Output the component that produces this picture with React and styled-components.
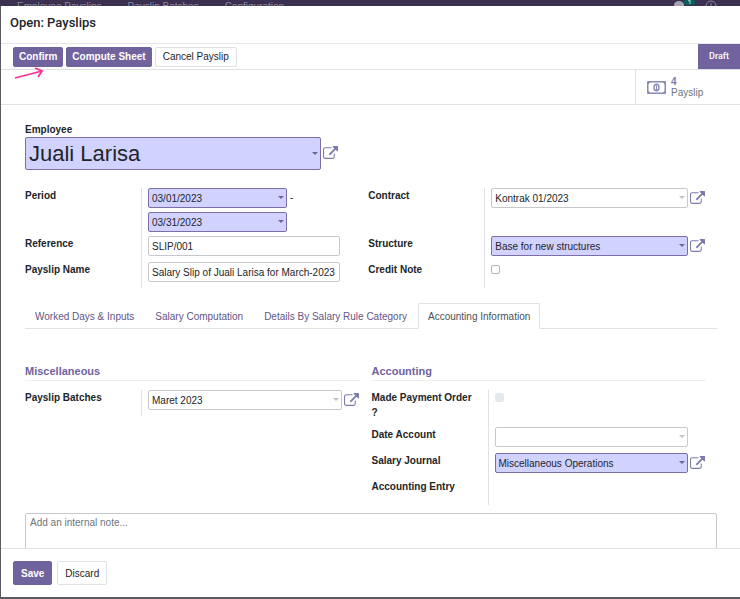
import React from 'react';
import styled, { createGlobalStyle, css } from 'styled-components';

const GlobalStyle = createGlobalStyle`
  * {
    box-sizing: border-box;
  }

  body {
    margin: 0;
    background: #5c5a61;
    color: #212529;
    font-family: 'Liberation Sans', Arial, sans-serif;
    font-size: 10px;
    line-height: 15px;
  }

  button,
  input,
  select,
  textarea {
    font: inherit;
    color: inherit;
  }
`;

const Screen = styled.div`
  display: flex;
  flex-direction: column;
  height: 100vh;
  padding-bottom: 2px;
`;

const NavStrip = styled.nav`
  display: flex;
  gap: 26px;
  flex: none;
  height: 6px;
  padding: 0 23px 0 17px;
  overflow: hidden;
  background: #3b3050;
  color: #8d879a;
  line-height: 13px;
`;

const NavItem = styled.a`
  color: inherit;
  text-decoration: none;
`;

const NavIcons = styled.div`
  display: flex;
  margin-left: auto;
`;

const Dialog = styled.main`
  display: flex;
  flex: 1;
  flex-direction: column;
  min-height: 0;
  margin-left: 1px;
  background: #fff;
`;

const DialogHeader = styled.header`
  flex: none;
  height: 38px;
  padding: 0 9px;
  border-bottom: 1px solid #e3e6ea;
`;

const DialogTitle = styled.h1`
  margin: 0;
  font-family: Roboto, 'Liberation Sans', sans-serif;
  font-size: 13px;
  font-weight: 500;
  line-height: 34px;
`;

const StatusBar = styled.div`
  display: flex;
  flex: none;
  align-items: center;
  gap: 3px;
  height: 26px;
  padding-left: 12px;
  border-bottom: 1px solid #dee2e6;
`;

const Button = styled.button`
  height: ${props => (props.$tall ? '24px' : '20px')};
  padding: 0 ${props => (props.$snug ? '5px' : '7px')};
  border: 1px solid ${props => (props.$primary ? '#71639e' : '#dee2e6')};
  border-radius: 2px;
  background: ${props => (props.$primary ? '#71639e' : '#fff')};
  color: ${props => (props.$primary ? '#fff' : '#212529')};
  font-weight: ${props => (props.$primary ? 'bold' : 'normal')};
  cursor: pointer;
`;

const ConfirmSlot = styled.div`
  display: flex;
  position: relative;
`;

const Pointer = styled.svg`
  position: absolute;
  top: 20px;
  left: 1px;
  overflow: visible;
`;

const Stage = styled.div`
  align-self: stretch;
  margin-left: auto;
  padding: 0 11px;
  background: #71639e;
  color: #fff;
  font-family: Roboto, 'Liberation Sans', sans-serif;
  font-size: 9px;
  font-weight: 500;
  line-height: 24px;
`;

const ButtonBox = styled.div`
  display: flex;
  flex: none;
  justify-content: flex-end;
  height: 35px;
  border-bottom: 1px solid #dee2e6;
`;

const StatButton = styled.button`
  display: flex;
  align-items: center;
  gap: 5px;
  width: 105px;
  padding: 0 11px;
  border: 0;
  border-left: 1px solid #dee2e6;
  background: none;
  color: #6c757d;
  line-height: 11px;
  text-align: left;
  cursor: pointer;
`;

const StatText = styled.span`
  display: flex;
  flex-direction: column;
`;

const StatValue = styled.span`
  color: #7c7bad;
  font-weight: bold;
`;

const Sheet = styled.form`
  flex: 1;
  min-height: 0;
  padding: 17px 23px 0 24px;
  overflow: hidden;
`;

const Label = styled.label`
  display: block;
  padding-right: 10px;
  font-weight: bold;
`;

const EmployeeRow = styled.div`
  display: flex;
  width: calc(50% - 32px);
  margin-bottom: 18px;
`;

const fieldBox = css`
  display: block;
  width: 100%;
  height: ${props => (props.$large ? '33px' : '20px')};
  padding: 0 3px;
  border: 1px solid ${props => (props.$required ? '#7c6eaa' : '#c6c8cb')};
  border-radius: 2px;
  background: ${props => (props.$required ? '#d2d2ff' : '#fff')};
  font-size: ${props => (props.$large ? '22px' : '10px')};
  outline: none;
  appearance: none;
`;

const TextInput = styled.input`
  ${fieldBox}
`;

const SelectInput = styled.select`
  ${fieldBox}
`;

const Picker = styled.div`
  position: relative;
  flex: 1;
  max-width: ${props => (props.$short ? '139px' : 'none')};
  margin-right: ${props => (props.$inset ? '18px' : '0')};

  &::after {
    content: '';
    position: absolute;
    top: calc(50% - 2px);
    right: 3px;
    border: 3px solid transparent;
    border-top-color: ${props => (props.$required ? '#71639e' : '#c0c2c5')};
    border-bottom: 0;
    pointer-events: none;
  }
`;

const LinkButton = styled.button`
  display: flex;
  align-items: center;
  flex: none;
  padding: 0 1px 2px 2px;
  border: 0;
  background: none;
  color: #7c7bad;
  cursor: pointer;
`;

const Groups = styled.div`
  display: grid;
  grid-template-columns: 14fr 15fr;
  gap: 28px;
  padding-right: 11px;
`;

const PageGroups = styled.div`
  display: grid;
  grid-template-columns: 1fr 1fr;
  gap: 12px;
  padding: 35px 11px 0 0;
`;

const Row = styled.div`
  display: grid;
  grid-template-columns: 116px 1fr;
  min-height: ${props => props.$height || '26px'};
`;

const Cell = styled.div`
  display: flex;
  flex-wrap: wrap;
  align-content: flex-start;
  gap: 4px 0;
  padding: 0 0 4px 6px;
  border-left: 1px solid #dee2e6;
`;

const Line = styled.div`
  display: flex;
  width: 100%;
`;

const Dash = styled.span`
  padding-left: 3px;
  line-height: 20px;
`;

const Checkbox = styled.input`
  width: 9px;
  height: 9px;
  margin: 3px 0;
  border: 1px solid ${props => (props.disabled ? '#e6e9ec' : '#adb5bd')};
  border-radius: 2px;
  background: ${props => (props.disabled ? '#e6e9ec' : '#fff')};
  appearance: none;
`;

const Tabs = styled.div`
  display: flex;
  gap: 1px;
  height: 26px;
  margin-top: 15px;
  border-bottom: 1px solid #dee2e6;
`;

const Tab = styled.button`
  height: 26px;
  padding: 0 9px;
  border: 1px solid ${props => (props.$active ? '#dee2e6' : 'transparent')};
  border-bottom-color: ${props => (props.$active ? '#fff' : 'transparent')};
  border-radius: 2px 2px 0 0;
  background: none;
  color: ${props => (props.$active ? '#495057' : '#5f5685')};
  cursor: pointer;
`;

const SectionTitle = styled.h2`
  margin: 0 0 9px;
  padding-bottom: 2px;
  border-bottom: 1px solid #eceef0;
  color: #71639e;
  font-size: 11px;
  line-height: 14px;
`;

const Note = styled.textarea`
  display: block;
  width: 100%;
  height: 60px;
  margin-top: 8px;
  padding: 1px 4px;
  border: 1px solid #c6c8cb;
  border-radius: 2px;
  resize: none;

  &::placeholder {
    color: #6c757d;
  }
`;

const Footer = styled.footer`
  display: flex;
  flex: none;
  align-items: center;
  gap: 5px;
  height: 49px;
  padding-left: 12px;
  border-top: 1px solid #dee2e6;
`;

const ExternalIcon = () => (
  <svg width="15" height="13" viewBox="0 0 1792 1536" fill="currentColor" aria-hidden="true">
    <path d="M1408 928v320q0 119-84.5 203.5t-203.5 84.5h-832q-119 0-203.5-84.5t-84.5-203.5v-832q0-119 84.5-203.5t203.5-84.5h704q14 0 23 9t9 23v64q0 14-9 23t-23 9h-704q-66 0-113 47t-47 113v832q0 66 47 113t113 47h832q66 0 113-47t47-113v-320q0-14 9-23t23-9h64q14 0 23 9t9 23zM1792 64v512q0 26-19 45t-45 19-45-19l-176-176-652 652q-10 10-23 10t-23-10l-114-114q-10-10-10-23t10-23l652-652-176-176q-19-19-19-45t19-45 45-19h512q26 0 45 19t19 45z" />
  </svg>
);

const MoneyIcon = () => (
  <svg width="19" height="13" viewBox="0 0 19 13" fill="none" stroke="#8a89b8" aria-hidden="true">
    <rect x="0.75" y="0.75" width="17.5" height="11.5" rx="0.5" strokeWidth="1.5" />
    <path d="M1 1h2.5L1 3.5zM18 1h-2.5L18 3.5zM1 12h2.5L1 9.5zM18 12h-2.5L18 9.5z" fill="#8a89b8" stroke="none" />
    <ellipse cx="9.5" cy="6.5" rx="2.5" ry="3.3" strokeWidth="1.4" />
    <path d="M9.5 4.5v4M8.5 8.5h2" strokeWidth="1" />
  </svg>
);

const Many2One = ({ id, value, required, large }) => (
  <>
    <Picker $required={required}>
      <SelectInput id={id} defaultValue={value} $required={required} $large={large}>
        <option>{value}</option>
      </SelectInput>
    </Picker>
    <LinkButton type="button" aria-label="External link">
      <ExternalIcon />
    </LinkButton>
  </>
);

const DateField = ({ id, value, required, short, inset, label }) => (
  <Picker $required={required} $short={short} $inset={inset}>
    <TextInput id={id} type="text" defaultValue={value} $required={required} aria-label={label} />
  </Picker>
);

const Field = ({ id, label, height, children }) => (
  <Row $height={height}>
    <Label htmlFor={id}>{label}</Label>
    <Cell>{children}</Cell>
  </Row>
);

const TABS = [
  'Worked Days & Inputs',
  'Salary Computation',
  'Details By Salary Rule Category',
  'Accounting Information',
];

const App = () => {
  return (
    <>
      <GlobalStyle />
      <Screen>
        <NavStrip>
          <NavItem href="#payslips">Employee Payslips</NavItem>
          <NavItem href="#batches">Payslip Batches</NavItem>
          <NavItem href="#config">Configuration</NavItem>
          <NavIcons>
            <svg width="43" height="6" aria-hidden="true">
              <ellipse cx="5" cy="5" rx="5" ry="4" fill="#a5a1ad" />
              <rect x="10" width="11" height="5" rx="2" fill="#04625c" />
              <path d="M14 1l2-1v4" fill="none" stroke="#b9cfce" />
              <circle cx="37" cy="6" r="5" fill="none" stroke="#8d879a" />
              <path d="M37 3v3" stroke="#8d879a" />
            </svg>
          </NavIcons>
        </NavStrip>

        <Dialog>
          <DialogHeader>
            <DialogTitle>Open: Payslips</DialogTitle>
          </DialogHeader>

          <StatusBar>
            <ConfirmSlot>
              <Button type="button" $primary $snug>Confirm</Button>
              <Pointer width="32" height="14" fill="none" stroke="#ff2e93" strokeWidth="1.8" aria-hidden="true">
                <path d="M1 11L28 4M21 1l7 3-4 6" />
              </Pointer>
            </ConfirmSlot>
            <Button type="button" $primary $snug>Compute Sheet</Button>
            <Button type="button">Cancel Payslip</Button>
            <Stage>Draft</Stage>
          </StatusBar>

          <ButtonBox>
            <StatButton type="button">
              <MoneyIcon />
              <StatText>
                <StatValue>4</StatValue>
                <span>Payslip</span>
              </StatText>
            </StatButton>
          </ButtonBox>

          <Sheet>
            <Label htmlFor="employee">Employee</Label>
            <EmployeeRow>
              <Many2One id="employee" value="Juali Larisa" required large />
            </EmployeeRow>

            <Groups>
              <div>
                <Field id="date_from" label="Period" height="48px">
                  <Line>
                    <DateField id="date_from" value="03/01/2023" required short />
                    <Dash>-</Dash>
                  </Line>
                  <Line>
                    <DateField id="date_to" value="03/31/2023" required short label="Period end" />
                  </Line>
                </Field>
                <Field id="reference" label="Reference">
                  <TextInput id="reference" type="text" defaultValue="SLIP/001" />
                </Field>
                <Field id="name" label="Payslip Name">
                  <TextInput id="name" type="text" defaultValue="Salary Slip of Juali Larisa for March-2023" />
                </Field>
              </div>
              <div>
                <Field id="contract" label="Contract" height="48px">
                  <Many2One id="contract" value="Kontrak 01/2023" />
                </Field>
                <Field id="structure" label="Structure">
                  <Many2One id="structure" value="Base for new structures" required />
                </Field>
                <Field id="credit" label="Credit Note">
                  <Checkbox id="credit" type="checkbox" />
                </Field>
              </div>
            </Groups>

            <Tabs role="tablist">
              {TABS.map((tab, i) => (
                <Tab key={tab} type="button" role="tab" aria-selected={i === 3} $active={i === 3}>
                  {tab}
                </Tab>
              ))}
            </Tabs>

            <PageGroups>
              <div>
                <SectionTitle>Miscellaneous</SectionTitle>
                <Field id="batch" label="Payslip Batches">
                  <Many2One id="batch" value="Maret 2023" />
                </Field>
              </div>
              <div>
                <SectionTitle>Accounting</SectionTitle>
                <Field id="paid" label="Made Payment Order ?" height="37px">
                  <Checkbox id="paid" type="checkbox" disabled />
                </Field>
                <Field id="date_account" label="Date Account">
                  <DateField id="date_account" value="" inset />
                </Field>
                <Field id="journal" label="Salary Journal">
                  <Many2One id="journal" value="Miscellaneous Operations" required />
                </Field>
                <Row>
                  <Label as="span">Accounting Entry</Label>
                  <Cell />
                </Row>
              </div>
            </PageGroups>

            <Note aria-label="Internal note" placeholder="Add an internal note..." />
          </Sheet>

          <Footer>
            <Button type="button" $primary $tall>Save</Button>
            <Button type="button" $tall>Discard</Button>
          </Footer>
        </Dialog>
      </Screen>
    </>
  );
};

export default App;
